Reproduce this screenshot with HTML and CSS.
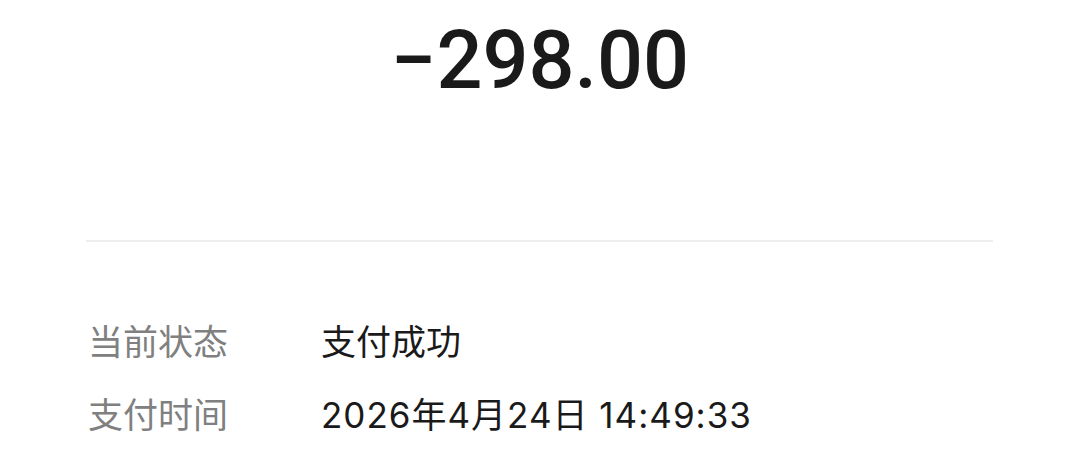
FILE: index.html
```html
<!DOCTYPE html>
<html lang="zh-CN">
<head>
<meta charset="utf-8">
<link rel="stylesheet" href="styles.css">
</head>
<body>
<div class="page">
  <div class="amount">−298.00</div>
  <div class="divider"></div>
  <div class="rows">
    <div class="row"><span class="label">当前状态</span><span class="value">支付成功</span></div>
    <div class="row"><span class="label">支付时间</span><span class="value time">2026年4月24日 14:49:33</span></div>
  </div>
</div>
</body>
</html>
```

FILE: styles.css
```css
html, body { margin: 0; padding: 0; background: #fff; }
.page { width: 1080px; height: 451px; overflow: hidden; font-family: Inter, "Noto Sans CJK SC", sans-serif; }
.amount {
  font-family: Roboto, "Liberation Sans", sans-serif;
  font-size: 81px;
  font-weight: 500;
  color: #1a1a1a;
  text-align: center;
  line-height: 1;
  padding-top: 20px;
  height: 240px;
  box-sizing: border-box;
}
.divider { margin: 0 87px 0 86px; height: 2px; background: #eeeeee; }
.rows { padding: 80px 0 0 88px; display: flex; flex-direction: column; gap: 38px; }
.row { display: flex; align-items: center; height: 35px; font-size: 35px; }
.label { width: 233px; color: #808080; }
.value { color: #1a1a1a; }
.time { letter-spacing: 1px; }
```
